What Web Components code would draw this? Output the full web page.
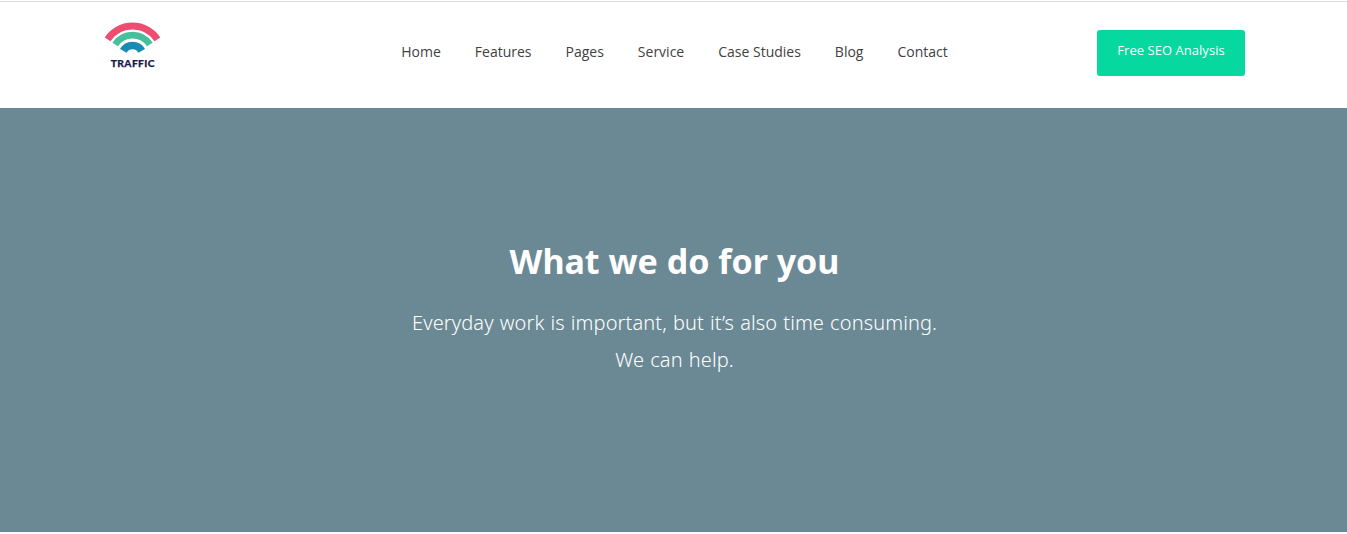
<!DOCTYPE html>
<html lang="en"><head><meta charset="utf-8"><title>Traffic</title>
<style>html,body{margin:0;background:#fff;height:534px;overflow:hidden}body{font-family:"Open Sans","Noto Sans",sans-serif}</style></head>
<body><traffic-page></traffic-page>
<script>
const define=(name,html)=>customElements.define(name,class extends HTMLElement{
 constructor(){super();this.attachShadow({mode:'open'}).innerHTML=html;}
});
define('traffic-logo',`<style>:host{display:block;width:56px;height:48px}svg{display:block;overflow:visible}text{font:900 10.2px Lato,sans-serif;fill:#17184b;stroke:#17184b;stroke-width:.25}</style>
<svg width="56" height="48" viewBox="0 0 56 48"><g fill="none"><path d="M3.6 17.3A30 30 0 0 1 53.4 17.3" stroke="#ee4c70" stroke-width="6.9"/><path d="M11.2 22.5A20.7 20.7 0 0 1 45.8 22.5" stroke="#46c09a" stroke-width="6.7"/><path d="M19.3 28.9A10.6 10.6 0 0 1 37.7 28.9" stroke="#188bb4" stroke-width="7.6"/></g><text x="6.8" y="45.1" textLength="43.6">TRAFFIC</text></svg>`);
define('nav-link',`<style>:host{display:block;font-size:14px;line-height:20px;color:#414141;white-space:nowrap}</style><slot></slot>`);
define('action-button',`<style>:host{display:block}button{display:block;width:148px;height:46px;border:0;border-radius:3px;background:#06d8a0;color:#fff;font:13px/20px "Open Sans",sans-serif;letter-spacing:.04px;padding:0 0 6px}</style><button><slot></slot></button>`);
define('site-header',`<style>:host{display:flex;box-sizing:border-box;height:108px;padding:22px 102px 0 104px;justify-content:space-between;align-items:flex-start;background:linear-gradient(#ddd,#ddd) 0 1px/100% 1px no-repeat}nav{display:flex;gap:34px;margin:20px 0 0 92px}action-button{margin-top:8px}</style>
<traffic-logo></traffic-logo><nav><nav-link>Home</nav-link><nav-link>Features</nav-link><nav-link>Pages</nav-link><nav-link>Service</nav-link><nav-link>Case Studies</nav-link><nav-link>Blog</nav-link><nav-link>Contact</nav-link></nav><action-button>Free SEO Analysis</action-button>`);
define('hero-banner',`<style>:host{display:block;box-sizing:border-box;height:424px;background:#6b8994;color:#fff;text-align:center;padding:128px 0 0 2px;font-family:"Noto Sans",sans-serif}h1{font-size:34px;line-height:50px;font-weight:700;margin:0}p{font-size:20px;line-height:37px;font-weight:300;letter-spacing:.1px;word-spacing:.8px;margin:18px 0 0}</style><h1><slot name="title"></slot></h1><p><slot></slot></p>`);
define('traffic-page',`<style>:host{display:block}</style><site-header></site-header><hero-banner><span slot="title">What we do for you</span>Everyday work is important, but it’s also time consuming.<br>We can help.</hero-banner>`);
</script></body></html>
